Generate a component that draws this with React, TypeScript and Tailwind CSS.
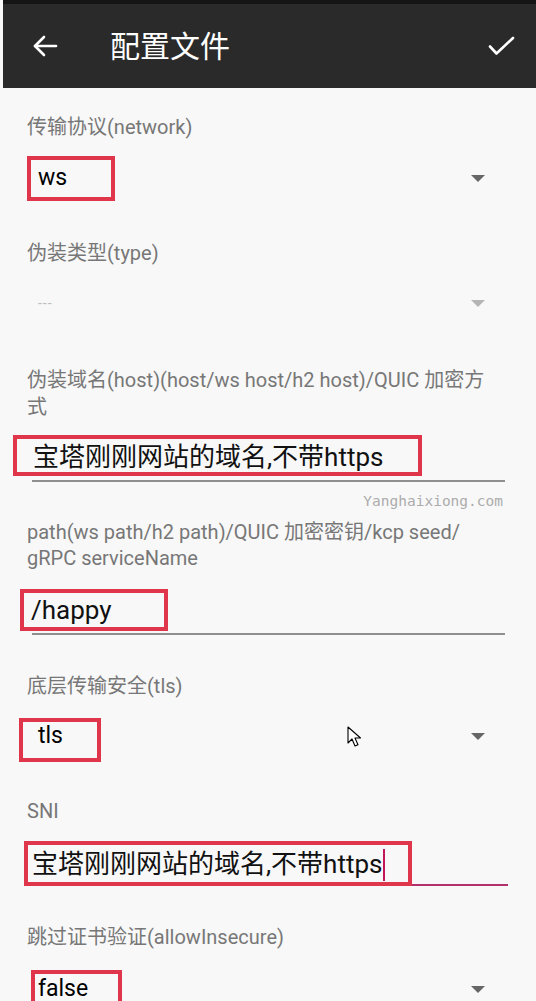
import type { ReactNode } from "react";

const font = "font-['Roboto','Noto_Sans_CJK_SC',sans-serif]";

function Label({ children, className = "" }: { children: ReactNode; className?: string }) {
  return (
    <div className={`pl-[24px] text-[20px] leading-[26px] text-[#777777] ${className}`}>
      {children}
    </div>
  );
}

function Caret({ light = false }: { light?: boolean }) {
  return (
    <div
      className={`h-0 w-0 border-x-[7px] border-t-[7px] border-x-transparent ${
        light ? "border-t-[#b5b5b5]" : "border-t-[#666666]"
      }`}
    />
  );
}

export default function App() {
  return (
    <div className={`min-h-[1001px] bg-[#f8f8f8] pl-[3px] ${font}`}>
      {/* status strip + toolbar */}
      <div className="h-[4px] bg-[#151515]" />
      <div className="flex h-[84px] items-center bg-[#2a2a2a] pl-[30px] pr-[21px]">
        <svg width="25" height="22" viewBox="0 0 25 22" fill="none" stroke="white" strokeWidth="2.6" strokeLinecap="round" strokeLinejoin="round">
          <path d="M2 11h21" />
          <path d="M11 2 2 11l9 9" />
        </svg>
        <div className="ml-[52px] flex-1 pt-[2px] text-[30px] leading-none text-white">配置文件</div>
        <svg width="27" height="20" viewBox="0 0 27 20" fill="none" stroke="white" strokeWidth="2.6" strokeLinecap="round" strokeLinejoin="round">
          <path d="M2 10.5 8.5 17.5 25 2" />
        </svg>
      </div>

      {/* network */}
      <Label className="mt-[26px]">传输协议(network)</Label>
      <div className="mt-[16px] flex h-[45px] items-center justify-between pr-[51px]">
        <div className="ml-[24px] flex h-[45px] w-[88px] items-center border-[4px] border-[#e0364c] pl-[7px] text-[23px] text-black">
          ws
        </div>
        <Caret />
      </div>

      {/* type */}
      <Label className="mt-[39px]">伪装类型(type)</Label>
      <div className="mt-[15px] flex h-[45px] items-center justify-between pr-[51px]">
        <div className="ml-[35px] text-[14px] tracking-[1px] text-[#bdbdbd]">---</div>
        <Caret light />
      </div>

      {/* host */}
      <Label className="mt-[41px] leading-[27px]">
        伪装域名(host)(host/ws host/h2 host)/QUIC 加密方
        <br />式
      </Label>
      <div className="relative z-10 ml-[10px] mt-[14px] flex h-[41px] w-[409px] items-center border-[4px] border-[#e0364c] pl-[16px] pt-[3px] text-[26px] text-[#111111]">
        宝塔刚刚网站的域名,不带https
      </div>
      <div className="ml-[29px] mr-[31px] mt-[4px] h-[2px] bg-[#8f8f8f]" />
      <div className="mt-[10px] pr-[33px] text-right font-['DejaVu_Sans_Mono',monospace] text-[14.5px] leading-[18px] text-[#acacac]">
        Yanghaixiong.com
      </div>

      {/* path */}
      <Label className="mt-[9px] leading-[25px]">
        path(ws path/h2 path)/QUIC 加密密钥/kcp seed/
        <br />
        gRPC serviceName
      </Label>
      <div className="relative z-10 ml-[17px] mt-[18px] flex h-[42px] w-[148px] items-center border-[4px] border-[#e0364c] pl-[7px] text-[26px] text-[#111111]">
        /happy
      </div>
      <div className="ml-[29px] mr-[31px] mt-[2px] h-[2px] bg-[#8f8f8f]" />

      {/* tls */}
      <Label className="mt-[38px]">底层传输安全(tls)</Label>
      <div className="relative mt-[19px] flex h-[44px] items-center justify-between pr-[51px]">
        <div className="ml-[16px] flex h-[44px] w-[82px] items-start border-[4px] border-[#e0364c] pl-[15px] text-[23px] leading-[28px] text-black">
          tls
        </div>
        <svg className="absolute left-[344px] top-[8px]" width="14" height="22" viewBox="0 0 14 22">
          <path d="M1 1v16l4-4 3 7 3-1.3-3-6.7h5.5z" fill="white" stroke="black" strokeWidth="1.1" strokeLinejoin="round" />
        </svg>
        <div className="mb-[8px]">
          <Caret />
        </div>
      </div>

      {/* SNI */}
      <Label className="mt-[36px]">SNI</Label>
      <div className="flex items-end">
        <div className="relative z-10 ml-[21px] mt-[17px] flex h-[45px] w-[388px] items-center border-[4px] border-[#e0364c] pl-[4px] pt-[2px] text-[26px] text-[#111111]">
          宝塔刚刚网站的域名,不带https
          <span className="ml-[1px] h-[32px] w-[2px] bg-[#c2185b]" />
        </div>
        <div className="h-[2px] w-[96px] bg-[#b3306a]" />
      </div>

      {/* allowInsecure */}
      <Label className="mt-[38px]">跳过证书验证(allowInsecure)</Label>
      <div className="mt-[20px] flex h-[45px] items-start justify-between pr-[51px]">
        <div className="ml-[28px] flex h-[45px] w-[91px] items-start border-[4px] border-[#e0364c] pl-[3px] text-[23px] leading-[30px] text-black">
          false
        </div>
        <div className="mt-[16px]">
          <Caret />
        </div>
      </div>
    </div>
  );
}
